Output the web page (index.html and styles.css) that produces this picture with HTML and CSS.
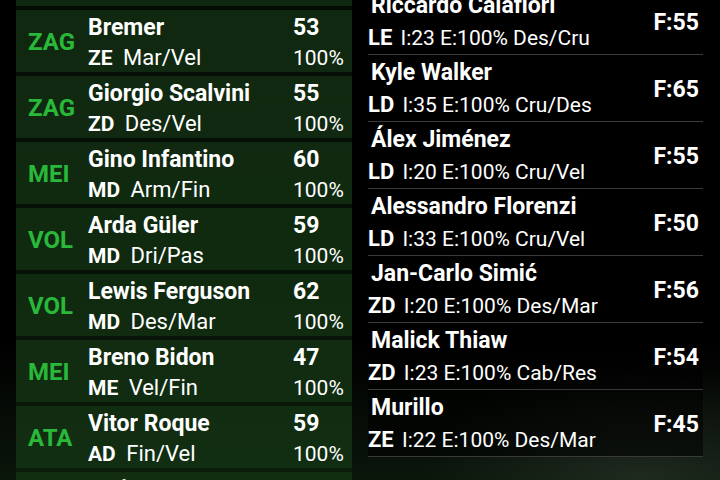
FILE: index.html
```html
<!DOCTYPE html>
<html>
<head>
<meta charset="utf-8">
<link rel="stylesheet" href="styles.css">
</head>
<body>
<div class="screen">
  <div class="lineup">
    <div class="prow first">
      <span class="pos">ZAG</span>
      <div class="info"><div class="nm">Federico Gatti</div><div class="sub"><b>ZE</b> Des/Res</div></div>
      <div class="stat"><div class="ovr">50</div><div class="pct">100%</div></div>
    </div>
    <div class="prow">
      <span class="pos">ZAG</span>
      <div class="info"><div class="nm">Bremer</div><div class="sub"><b>ZE</b> Mar/Vel</div></div>
      <div class="stat"><div class="ovr">53</div><div class="pct">100%</div></div>
    </div>
    <div class="prow">
      <span class="pos">ZAG</span>
      <div class="info"><div class="nm">Giorgio Scalvini</div><div class="sub"><b>ZD</b> Des/Vel</div></div>
      <div class="stat"><div class="ovr">55</div><div class="pct">100%</div></div>
    </div>
    <div class="prow">
      <span class="pos">MEI</span>
      <div class="info"><div class="nm">Gino Infantino</div><div class="sub"><b>MD</b> Arm/Fin</div></div>
      <div class="stat"><div class="ovr">60</div><div class="pct">100%</div></div>
    </div>
    <div class="prow">
      <span class="pos">VOL</span>
      <div class="info"><div class="nm">Arda Güler</div><div class="sub"><b>MD</b> Dri/Pas</div></div>
      <div class="stat"><div class="ovr">59</div><div class="pct">100%</div></div>
    </div>
    <div class="prow">
      <span class="pos">VOL</span>
      <div class="info"><div class="nm">Lewis Ferguson</div><div class="sub"><b>MD</b> Des/Mar</div></div>
      <div class="stat"><div class="ovr">62</div><div class="pct">100%</div></div>
    </div>
    <div class="prow">
      <span class="pos">MEI</span>
      <div class="info"><div class="nm">Breno Bidon</div><div class="sub"><b>ME</b> Vel/Fin</div></div>
      <div class="stat"><div class="ovr">47</div><div class="pct">100%</div></div>
    </div>
    <div class="prow">
      <span class="pos">ATA</span>
      <div class="info"><div class="nm">Vitor Roque</div><div class="sub"><b>AD</b> Fin/Vel</div></div>
      <div class="stat"><div class="ovr">59</div><div class="pct">100%</div></div>
    </div>
    <div class="prow">
      <span class="pos">ATA</span>
      <div class="info"><div class="nm">Moise Kean</div><div class="sub"><b>CA</b> Fin/Vel</div></div>
      <div class="stat"><div class="ovr">58</div><div class="pct">100%</div></div>
    </div>
  </div>
  <div class="market">
    <div class="rrow">
      <div class="info"><div class="nm">Riccardo Calafiori</div><div class="sub"><b>LE</b> I:23 E:100% Des/Cru</div></div>
      <div class="f">F:55</div>
    </div>
    <div class="rrow">
      <div class="info"><div class="nm">Kyle Walker</div><div class="sub"><b>LD</b> I:35 E:100% Cru/Des</div></div>
      <div class="f">F:65</div>
    </div>
    <div class="rrow">
      <div class="info"><div class="nm">Álex Jiménez</div><div class="sub"><b>LD</b> I:20 E:100% Cru/Vel</div></div>
      <div class="f">F:55</div>
    </div>
    <div class="rrow">
      <div class="info"><div class="nm">Alessandro Florenzi</div><div class="sub"><b>LD</b> I:33 E:100% Cru/Vel</div></div>
      <div class="f">F:50</div>
    </div>
    <div class="rrow">
      <div class="info"><div class="nm">Jan-Carlo Simić</div><div class="sub"><b>ZD</b> I:20 E:100% Des/Mar</div></div>
      <div class="f">F:56</div>
    </div>
    <div class="rrow">
      <div class="info"><div class="nm">Malick Thiaw</div><div class="sub"><b>ZD</b> I:23 E:100% Cab/Res</div></div>
      <div class="f">F:54</div>
    </div>
    <div class="rrow">
      <div class="info"><div class="nm">Murillo</div><div class="sub"><b>ZE</b> I:22 E:100% Des/Mar</div></div>
      <div class="f">F:45</div>
    </div>
  </div>
</div>
</body>
</html>
```
FILE: styles.css
```css
html, body {
  margin: 0;
  padding: 0;
}
body {
  width: 720px;
  height: 480px;
  overflow: hidden;
  background:
    radial-gradient(ellipse 220px 120px at 640px 480px, rgba(70,80,70,0.35), rgba(0,0,0,0) 100%),
    linear-gradient(to bottom, #000 0%, #000 72%, #0b160b 100%);
  font-family: Roboto, "Noto Sans", sans-serif;
  color: #fff;
}
.screen {
  display: flex;
  align-items: flex-start;
  height: 480px;
  overflow: hidden;
}
.lineup {
  width: 336px;
  flex: none;
  margin-left: 16px;
  margin-top: -56px;
  background: linear-gradient(to bottom, #050b05 0%, #071207 60%, #0e200e 100%);
  display: flex;
  flex-direction: column;
  gap: 4px;
}
.prow {
  height: 62px;
  display: flex;
  align-items: center;
  background: rgba(22, 58, 22, 0.62);
}
.pos {
  width: 72px;
  padding-left: 12px;
  box-sizing: border-box;
  color: #29b83a;
  font-weight: 700;
  font-size: 24px;
  flex: none;
  margin-top: 2px;
}
.info {
  flex: 1;
  min-width: 0;
}
.prow .info {
  padding-top: 4px;
}
.prow .nm {
  font-weight: 700;
  font-size: 23px;
  line-height: 30px;
  height: 30px;
  white-space: nowrap;
}
.prow .sub {
  font-size: 22px;
  line-height: 30px;
  white-space: nowrap;
}
.prow .sub b {
  margin-right: 5px;
  font-size: 21px;
}
.stat {
  width: 59px;
  flex: none;
  padding-top: 4px;
}
.ovr {
  font-weight: 700;
  font-size: 23px;
  line-height: 30px;
}
.pct {
  font-size: 21px;
  line-height: 30px;
}
.market {
  width: 335px;
  flex: none;
  margin-left: 16px;
  margin-top: -12px;
  display: flex;
  flex-direction: column;
}
.rrow {
  height: 66px;
  border-bottom: 1px solid #3a3a3a;
  display: flex;
  align-items: center;
  padding: 0 4px 0 0;
  background: rgba(0,0,0,0.55);
}
.rrow .info {
  padding-top: 2px;
}
.rrow .nm {
  font-weight: 700;
  font-size: 23px;
  line-height: 30px;
  padding-left: 3px;
  white-space: nowrap;
}
.rrow .sub {
  font-size: 21px;
  line-height: 30px;
  margin-top: 2px;
  white-space: nowrap;
}
.rrow .sub b {
  font-size: 22px;
  margin-right: 3px;
}
.f {
  font-weight: 700;
  font-size: 23px;
  flex: none;
  margin-top: 3px;
}
```
